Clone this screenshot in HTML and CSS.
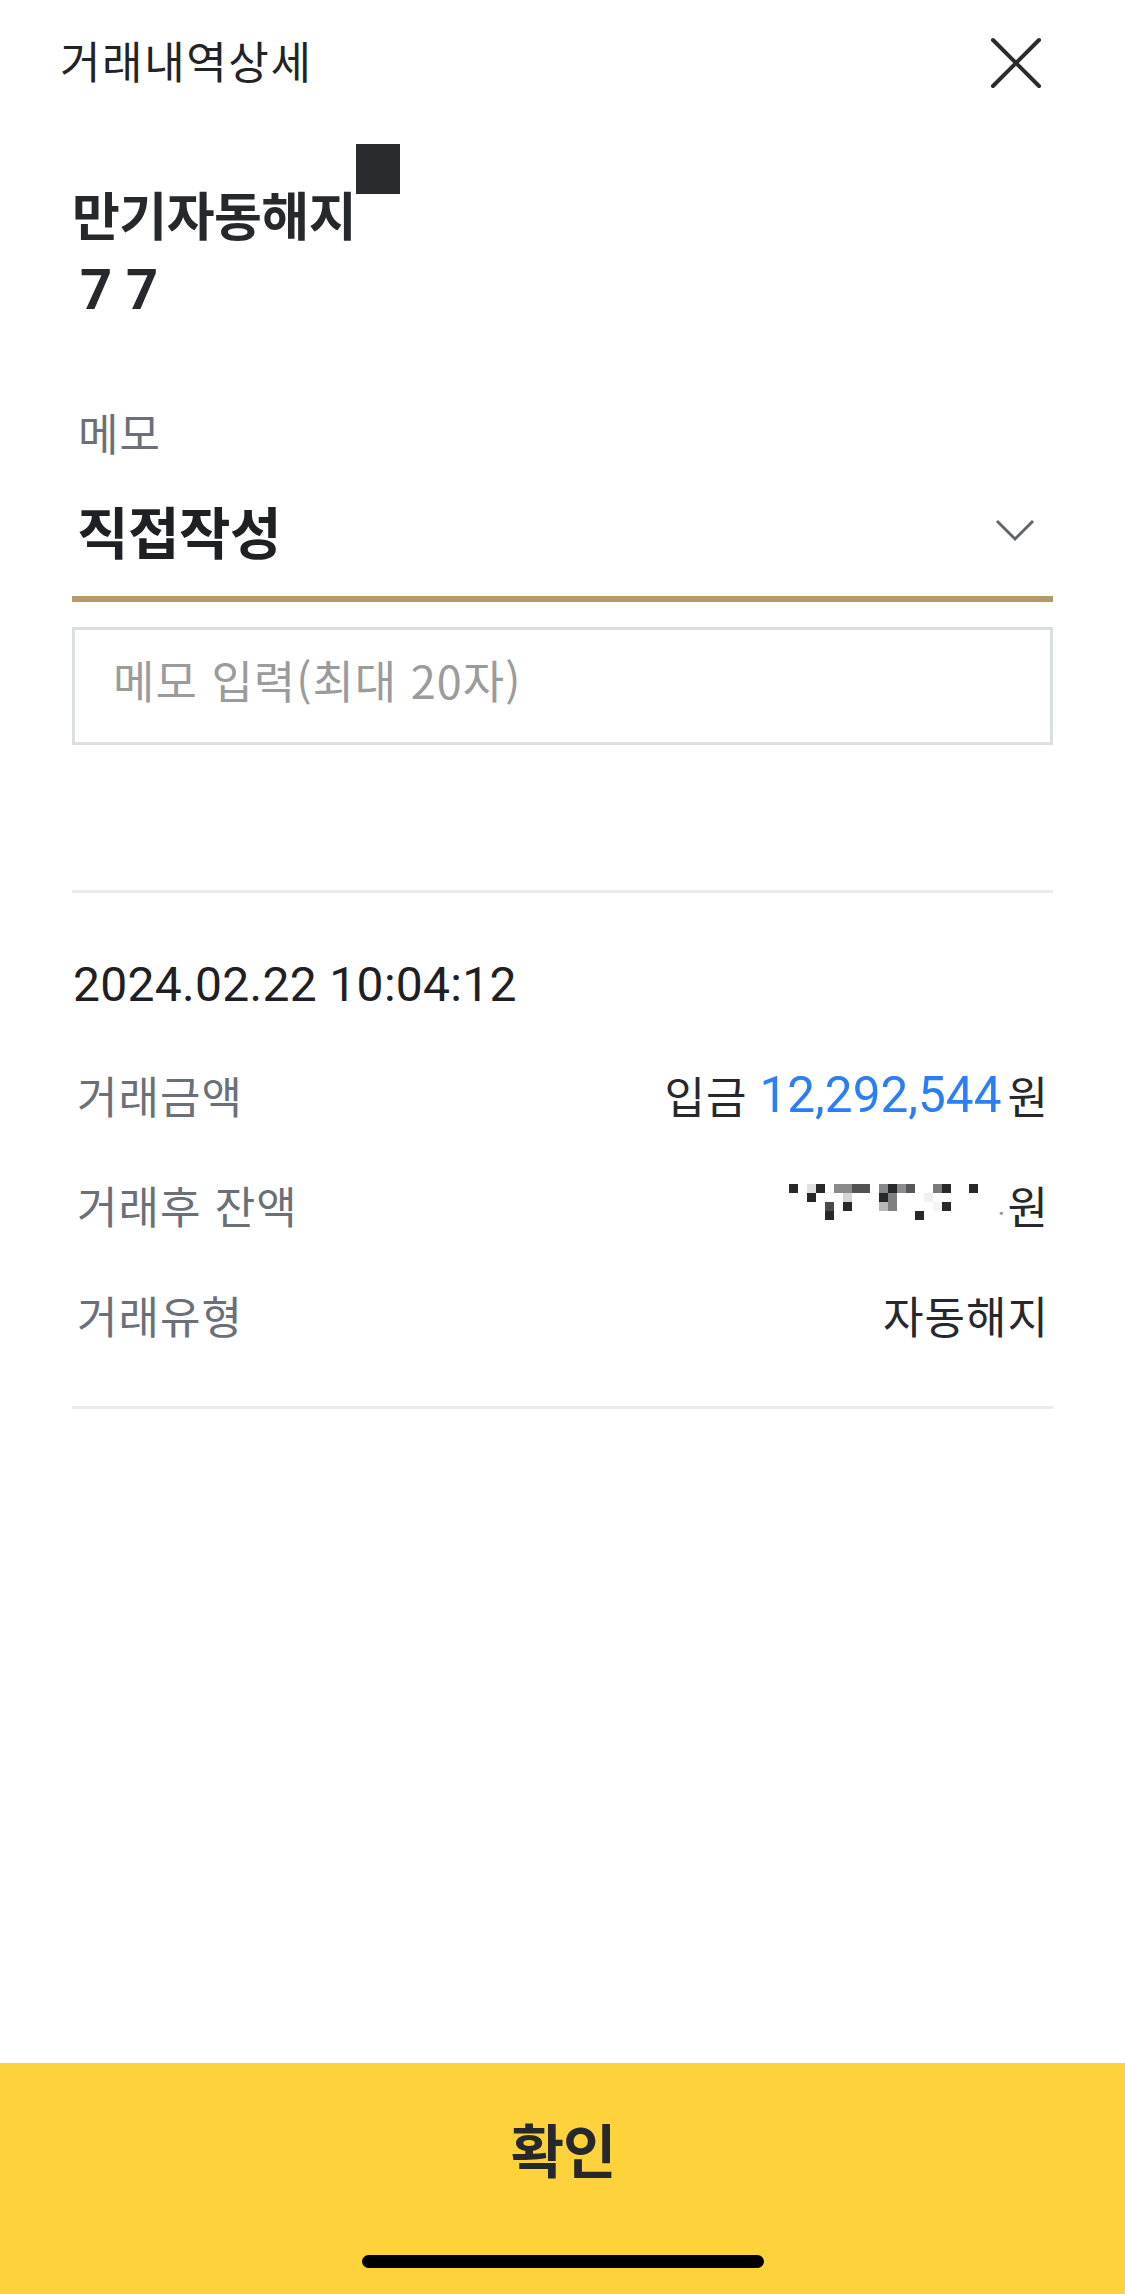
FILE: index.html
```html
<!DOCTYPE html>
<html lang="ko">
<head>
<meta charset="utf-8">
<title>거래내역상세</title>
<link rel="stylesheet" href="styles.css">
</head>
<body>
<header class="header">
  <h1 class="header-title">거래내역상세</h1>
  <svg class="close" width="56" height="56" viewBox="0 0 56 56" aria-label="닫기">
    <path d="M5 5 L51 51 M51 5 L5 51" stroke="#2a2c30" stroke-width="4" stroke-linecap="round" fill="none"/>
  </svg>
</header>
<main class="main">
  <section class="hero">
    <div class="name-line">만기자동해지<span class="mask-box"></span></div>
    <div class="acct-line">7 7</div>
  </section>
  <div class="memo-label">메모</div>
  <div class="select">
    <span class="select-value">직접작성</span>
    <svg class="chevron" width="40" height="24" viewBox="0 0 40 24">
      <polyline points="2,3 20,21 38,3" stroke="#60656c" stroke-width="3" fill="none"/>
    </svg>
  </div>
  <input class="memo-input" type="text" placeholder="메모 입력(최대 20자)">
  <div class="divider first"></div>
  <div class="date">2024.02.22 10:04:12</div>
  <div class="rows">
    <div class="row">
      <span class="row-label">거래금액</span>
      <span class="row-value"><span class="kr">입금</span><span class="num blue">12,292,544</span><span class="kr">원</span></span>
    </div>
    <div class="row">
      <span class="row-label">거래후 잔액</span>
      <span class="row-value">
        <svg class="mosaic" width="189" height="36" viewBox="0 0 21 4" shape-rendering="crispEdges">
          <rect x="0" y="0" width="1" height="1" fill="#26282c"/>
          <rect x="2" y="0" width="1" height="1" fill="#e0e0e0"/>
          <rect x="3" y="0" width="1" height="1" fill="#26282c"/>
          <rect x="5" y="0" width="2" height="1" fill="#8a8a8a"/>
          <rect x="7" y="0" width="2" height="1" fill="#505256"/>
          <rect x="10" y="0" width="1" height="1" fill="#888888"/>
          <rect x="11" y="0" width="1" height="1" fill="#26282c"/>
          <rect x="12" y="0" width="1" height="1" fill="#8c8c8c"/>
          <rect x="13" y="0" width="1" height="1" fill="#55575b"/>
          <rect x="16" y="0" width="1" height="1" fill="#7a7a7a"/>
          <rect x="17" y="0" width="1" height="1" fill="#26282c"/>
          <rect x="20" y="0" width="1" height="1" fill="#26282c"/>
          <rect x="2" y="1" width="1" height="1" fill="#26282c"/>
          <rect x="6" y="1" width="1" height="1" fill="#d5d5d5"/>
          <rect x="10" y="1" width="1" height="1" fill="#26282c"/>
          <rect x="11" y="1" width="1" height="1" fill="#808080"/>
          <rect x="15" y="1" width="1" height="1" fill="#f0f0f0"/>
          <rect x="4" y="2" width="1" height="1" fill="#4a4b4f"/>
          <rect x="6" y="2" width="1" height="1" fill="#26282c"/>
          <rect x="10" y="2" width="1" height="1" fill="#b8b8b8"/>
          <rect x="11" y="2" width="1" height="1" fill="#808080"/>
          <rect x="16" y="2" width="1" height="1" fill="#f5f5f5"/>
          <rect x="17" y="2" width="1" height="1" fill="#26282c"/>
          <rect x="4" y="3" width="1" height="1" fill="#26282c"/>
          <rect x="14" y="3" width="1" height="1" fill="#26282c"/>
        </svg><span class="dot">.</span><span class="kr">원</span>
      </span>
    </div>
    <div class="row">
      <span class="row-label">거래유형</span>
      <span class="row-value"><span class="kr">자동해지</span></span>
    </div>
  </div>
  <div class="divider"></div>
</main>
<footer class="footer">
  <button class="confirm" type="button">확인</button>
  <div class="home-bar"></div>
</footer>
</body>
</html>
```
FILE: styles.css
```css
* { box-sizing: border-box; }

html, body {
  margin: 0;
  padding: 0;
  background: #ffffff;
}

body {
  width: 1125px;
  height: 2294px;
  display: flex;
  flex-direction: column;
  font-family: "Noto Sans CJK KR", sans-serif;
  color: #26282c;
}

.header {
  height: 120px;
  flex: none;
  display: flex;
  align-items: center;
  justify-content: space-between;
  padding: 0 81px 0 60px;
}

.header-title {
  margin: 0;
  font-size: 44px;
  font-weight: 400;
  letter-spacing: 1.6px;
  line-height: 50px;
  color: #222326;
}

.close {
  display: block;
  margin-top: 5px;
}

.main {
  flex: 1;
  display: flex;
  flex-direction: column;
  padding: 0 72px;
}

.hero {
  padding-top: 64px;
}

.name-line {
  position: relative;
  font-size: 52px;
  font-weight: 700;
  letter-spacing: -0.5px;
  line-height: 60px;
  color: #26282c;
}

.mask-box {
  position: absolute;
  left: 284px;
  top: -40px;
  width: 44px;
  height: 50px;
  background: #2a2b2f;
}

.acct-line {
  margin-top: 16px;
  padding-left: 8px;
  font-family: Roboto, sans-serif;
  font-size: 56px;
  font-weight: 700;
  line-height: 60px;
  color: #26282c;
}

.memo-label {
  margin-top: 87px;
  padding-left: 6px;
  font-size: 44px;
  letter-spacing: 1px;
  line-height: 50px;
  color: #6b7078;
}

.select {
  margin-top: 7px;
  height: 138px;
  display: flex;
  align-items: center;
  justify-content: space-between;
  padding: 0 18px 0 5px;
  border-bottom: 6px solid #b39a68;
}

.select-value {
  font-size: 56px;
  font-weight: 700;
  letter-spacing: -0.5px;
  line-height: 64px;
  color: #1f2023;
}

.chevron {
  display: block;
}

.memo-input {
  display: block;
  width: 100%;
  height: 118px;
  margin: 25px 0 0;
  padding: 0 0 13px 38px;
  border: 3px solid #dcdfe2;
  border-radius: 0;
  outline: none;
  background: #fff;
  font-family: "Noto Sans CJK KR", sans-serif;
  font-size: 45px;
  letter-spacing: 1px;
  color: #26282c;
}

.memo-input::placeholder {
  color: #9b9b9b;
  opacity: 1;
}

.divider {
  height: 3px;
  background: #e8ecec;
  margin-top: 36px;
}

.divider.first {
  margin-top: 145px;
}

.date {
  margin-top: 64px;
  padding-left: 1px;
  font-family: Roboto, sans-serif;
  font-size: 48px;
  letter-spacing: 0.3px;
  line-height: 56px;
  color: #1f2023;
}

.rows {
  margin-top: 27px;
  display: flex;
  flex-direction: column;
}

.row {
  height: 110px;
  display: flex;
  align-items: center;
  justify-content: space-between;
  padding: 0 4px 0 5px;
}

.row-label {
  font-size: 44px;
  letter-spacing: 1px;
  line-height: 50px;
  color: #6b7078;
}

.row-value {
  display: flex;
  align-items: center;
  font-size: 44px;
  letter-spacing: 1px;
  line-height: 50px;
  color: #26282c;
}

.num {
  font-family: Roboto, sans-serif;
  font-size: 49.5px;
  letter-spacing: 0;
  margin: 0 6px 0 12px;
}

.blue {
  color: #2b7ef5;
}

.mosaic {
  display: block;
  margin-top: -6px;
}

.dot {
  margin: 0 2px 0 20px;
  font-family: Roboto, sans-serif;
  font-size: 30px;
  color: #9a9a9a;
  letter-spacing: 0;
}

.footer {
  flex: none;
  height: 231px;
  background: #fdd23a;
  display: flex;
  flex-direction: column;
  align-items: center;
  padding-top: 50px;
}

.confirm {
  border: 0;
  padding: 0;
  margin: 0;
  background: transparent;
  font-family: "Noto Sans CJK KR", sans-serif;
  font-size: 58px;
  font-weight: 700;
  letter-spacing: -1px;
  line-height: 70px;
  color: #26282c;
  padding-left: 1px;
}

.home-bar {
  margin-top: 72px;
  width: 402px;
  height: 13px;
  border-radius: 7px;
  background: #000;
}
```
